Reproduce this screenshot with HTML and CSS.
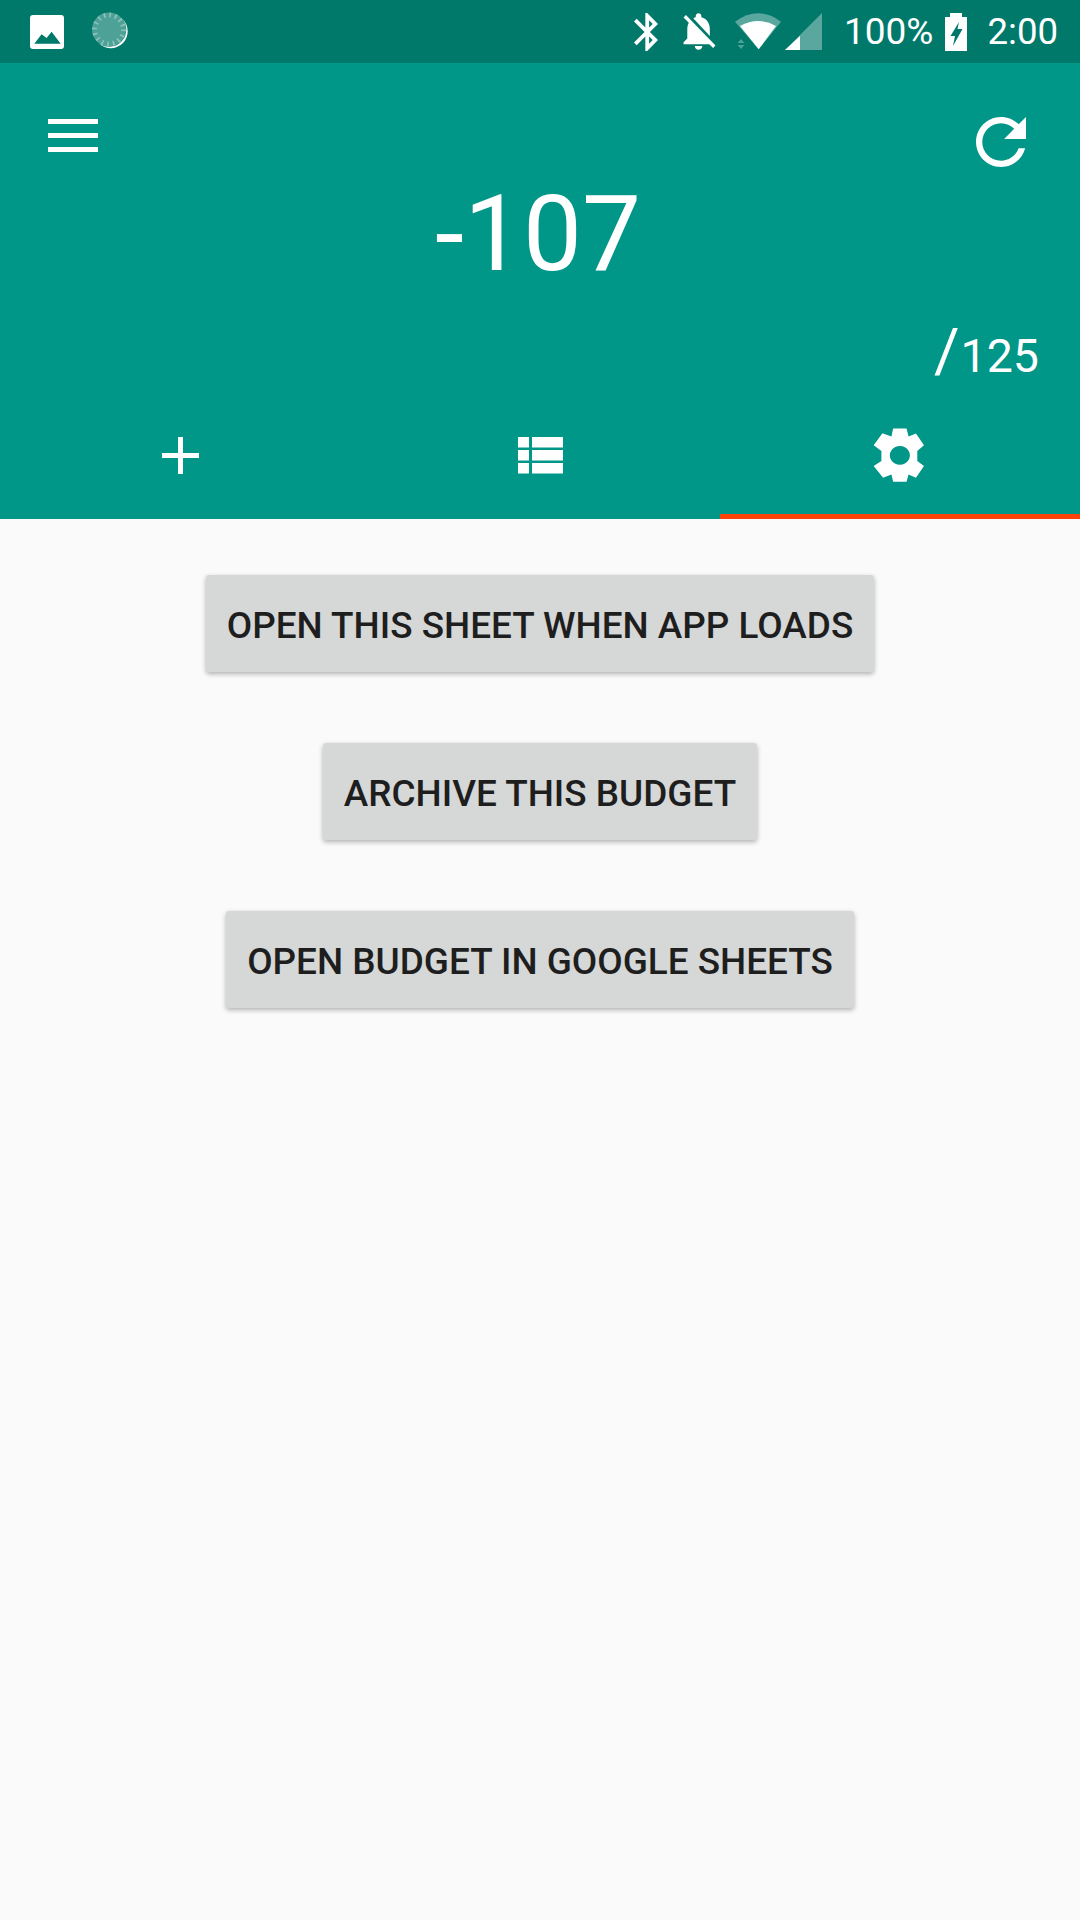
FILE: index.html
```html
<!DOCTYPE html>
<html lang="en">
<head>
<meta charset="utf-8">
<title>Budget settings</title>
<link rel="stylesheet" href="styles.css">
</head>
<body>
<header class="header">
  <div class="status">
    <div class="status-left">
      <svg class="ic-image" viewBox="0 0 34 34"><path fill="#fff" fill-rule="evenodd" d="M3 0h28a3 3 0 0 1 3 3v28a3 3 0 0 1-3 3H3a3 3 0 0 1-3-3V3a3 3 0 0 1 3-3zM4.3 28.7h26.4L21.6 16.7l-5 6.3-5-3.700z"/></svg>
      <svg class="ic-spin" viewBox="0 1.500 40 40"><path fill="#fff" d="M32 8A17 17 0 1 1 8 32A17 17 0 0 0 32 8z"/><circle cx="19" cy="19" r="17" fill="#fff" fill-opacity=".3"/><circle cx="19" cy="19" r="14.500" fill="none" stroke="#fff" stroke-opacity=".35" stroke-width="5" stroke-dasharray="1.700 3.990"/></svg>
    </div>
    <div class="status-right">
      <svg class="ic-bt" viewBox="5 2 12.71 20"><path fill="#fff" d="M17.71 7.71L12 2h-1v7.590L6.410 5 5 6.410 10.590 12 5 17.590 6.410 19 11 14.410V22h1l5.710-5.710-4.300-4.290 4.300-4.290zM13 5.830l1.880 1.880L13 9.590V5.830zm1.880 10.460L13 18.170v-3.760l1.880 1.880z"/></svg>
      <svg class="ic-bell" viewBox="3.800 2.400 17.400 19.700"><path fill="#fff" d="M20 18.690L7.840 6.140 5.270 3.490 4 4.760l2.800 2.800v.01c-.52.99-.8 2.160-.8 3.420v5l-2 2v1h13.730l2 2L21 19.720l-1-1.030zM12 22c1.110 0 2-.89 2-2h-4c0 1.110.89 2 2 2zm6-7.320V11c0-3.080-1.640-5.640-4.500-6.320V4c0-.83-.67-1.500-1.500-1.500s-1.500.67-1.500 1.500v.68c-.15.03-.29.08-.42.12-.1.03-.2.07-.3.11h-.01c-.2.08-.4.17-.59.27-.01 0-.01 0-.02.01L18 14.680z"/></svg>
      <svg class="ic-wifi" viewBox="0 0 46 38"><path fill="#fff" fill-opacity=".35" d="M23.700 36.300L0 8.700Q23.700-8 46 8.700z"/><path fill="#fff" d="M23.700 36.300L5 13Q23.700 3 41 13z"/><path fill="#fff" fill-opacity=".3" d="M6 26l3.500 4H2.500zM6 36l-3.500-4h7z"/></svg>
      <svg class="ic-signal" viewBox="0 0 37 37"><path fill="#fff" fill-opacity=".35" d="M37 0v37H0z"/><path fill="#fff" d="M0 37l15-14v14z"/></svg>
      <span class="status-text pct">100%</span>
      <svg class="ic-batt" viewBox="0 0 22 38"><path fill="#fff" fill-rule="evenodd" d="M5 0h12v4h5v34H0V4h5zM14 9L5.500 23H10L8 33L17.500 16H12.500z"/></svg>
      <span class="status-text time">2:00</span>
    </div>
  </div>
  <div class="toolbar">
    <div class="menu"><span></span><span></span><span></span></div>
    <svg class="ic-refresh" viewBox="4 4 16 16"><path fill="#fff" d="M17.650 6.350C16.200 4.900 14.210 4 12 4c-4.420 0-7.990 3.580-7.990 8s3.570 8 7.990 8c3.730 0 6.840-2.550 7.730-6h-2.080c-.82 2.330-3.040 4-5.650 4-3.310 0-6-2.690-6-6s2.690-6 6-6c1.660 0 3.140.69 4.220 1.780L13 11h7V4l-2.350 2.350z"/></svg>
  </div>
  <div class="balance">-107</div>
  <div class="total"><span class="slash">/</span><span class="amount">125</span></div>
  <nav class="tabs">
    <div class="tab">
      <svg class="ic-plus" viewBox="0 0 37 37"><path fill="#fff" d="M16 0h5v16h16v5H21v16h-5V21H0v-5h16z"/></svg>
    </div>
    <div class="tab">
      <svg class="ic-list" viewBox="0 0 45 37"><path fill="#fff" d="M0 0h11v10.500H0zM14 0h31v10.500H14zM0 13h11v10.500H0zM14 13h31v10.500H14zM0 26h11v10.500H0zM14 26h31v10.500H14z"/></svg>
    </div>
    <div class="tab tab-active">
      <svg class="ic-gear" viewBox="40 27 152 160"><path fill="#fff" fill-rule="evenodd" d="M100 28H140L146 52 168 43 192 78 172 95V125L192 140 168 175 146 165 140 187H100L95 165 70 175 42 140 65 125V95L42 78 68 42 95 52zM120 80a30 28 0 1 0 .1 0z"/></svg>
    </div>
  </nav>
</header>
<main class="actions">
  <button class="btn">OPEN THIS SHEET WHEN APP LOADS</button>
  <button class="btn">ARCHIVE THIS BUDGET</button>
  <button class="btn">OPEN BUDGET IN GOOGLE SHEETS</button>
</main>
</body>
</html>
```
FILE: styles.css
```css
* { box-sizing: border-box; }
html, body { margin: 0; padding: 0; }
body {
  width: 1080px;
  height: 1920px;
  overflow: hidden;
  background: #fafafa;
  font-family: Roboto, "Liberation Sans", sans-serif;
}
svg { display: block; flex: none; }

.header { background: #009688; color: #fff; height: 519px; display: flex; flex-direction: column; }

.status {
  height: 63px;
  background: #00796b;
  display: flex;
  justify-content: space-between;
  align-items: center;
}
.status-left { display: flex; align-items: center; padding-left: 30px; }
.status-right { display: flex; align-items: center; padding-right: 22px; }
.ic-image { width: 34px; height: 34px; }
.ic-spin { width: 40px; height: 40px; margin-left: 26px; }
.ic-bt { width: 24px; height: 38px; }
.ic-bell { width: 33px; height: 37px; margin-left: 25px; }
.ic-wifi { width: 46px; height: 38px; margin-left: 19px; }
.ic-signal { width: 37px; height: 37px; margin-left: 4px; }
.ic-batt { width: 22px; height: 38px; margin-left: 12px; }
.status-text { font-size: 36.600px; line-height: 42px; font-weight: 400; }
.pct { margin-left: 22px; font-size: 37px; }
.time { margin-left: 20px; }

.toolbar {
  display: flex;
  justify-content: space-between;
  align-items: flex-start;
  padding: 54px 54px 0 48px;
}
.menu { display: flex; flex-direction: column; gap: 9px; width: 50px; margin-top: 2px; }
.menu span { display: block; height: 5px; background: #fff; }
.ic-refresh { width: 50px; height: 50px; }

.balance {
  margin-top: 15px;
  text-align: center;
  font-size: 105px;
  line-height: 105px;
  font-weight: 400;
  padding-right: 4px;
}
.total {
  margin-top: 33px;
  height: 62px;
  line-height: 62px;
  text-align: right;
  padding-right: 41px;
  font-weight: 400;
}
.slash { font-size: 62px; }
.amount { font-size: 46.500px; margin-left: 1px; }

.tabs { flex: 1; display: grid; grid-template-columns: repeat(3, 1fr); }
.tab {
  display: flex;
  align-items: center;
  justify-content: center;
  padding-top: 14px;
  border-bottom: 5px solid transparent;
}
.tab-active { border-bottom-color: #ff4308; }
.ic-plus { width: 37px; height: 37px; }
.ic-list { width: 45px; height: 37px; }
.ic-gear { width: 51px; height: 54px; margin-right: 3px; }

.actions {
  display: flex;
  flex-direction: column;
  align-items: center;
  gap: 71px;
  padding-top: 56px;
}
.btn {
  height: 97px;
  padding: 4px 21px 0;
  border: 0;
  border-radius: 3px;
  background: #d6d7d7;
  color: #1e1e1e;
  font-family: inherit;
  font-size: 36.900px;
  font-weight: 500;
  box-shadow: 0 2px 5px rgba(0, 0, 0, .3);
}
```
